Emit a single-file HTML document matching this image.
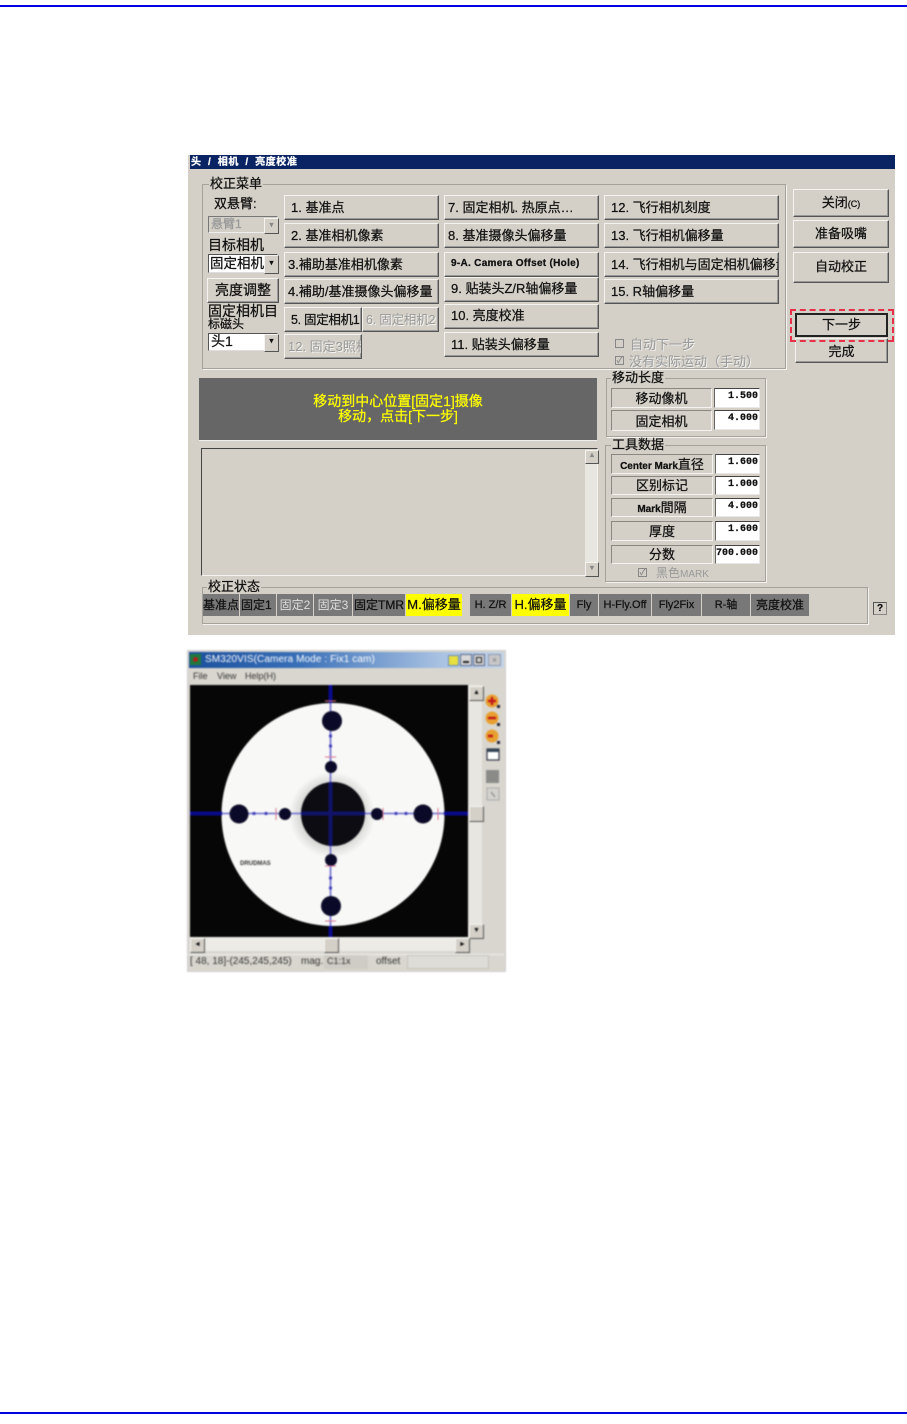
<!DOCTYPE html>
<html><head><meta charset="utf-8">
<style>
html,body{margin:0;padding:0;background:#fff}
body{width:907px;height:1424px;position:relative;overflow:hidden;font-family:"Liberation Sans","Noto Sans CJK SC",sans-serif;color:#111}
.a,.b,.l,.g,.i,.s,.t,.c{position:absolute;box-sizing:border-box}
.b{background:#d4d0c8;border:1px solid;border-color:#f4f3ef #555 #555 #f4f3ef;box-shadow:inset -1px -1px 0 #999;font-size:13px;line-height:24px;white-space:nowrap;overflow:hidden;padding-left:6px}
.m{text-align:center;padding-left:0}
.dis{color:#999;text-shadow:1px 1px 0 #f4f3ef;-webkit-text-stroke:0}
.g{border:1px solid #a5a29b;box-shadow:1px 1px 0 #f4f3ef}
.t{background:#d4d0c8;font-size:13px;line-height:14px;white-space:nowrap;padding:0 1px}
.l{font-size:13px;line-height:15px;white-space:nowrap}
.r{background:#d4d0c8;border:1px solid;border-color:#8a8780 #f4f3ef #f4f3ef #8a8780;text-align:center;font-size:13px;white-space:nowrap;overflow:hidden}
.i{background:#fff;border:1px solid;border-color:#444 #e8e8e8 #e8e8e8 #666;text-align:right;font:bold 10px/16px "Liberation Mono",monospace;padding-right:1px}
.s{background:#787878;top:594px;height:22px;text-align:center;font-size:12px;line-height:22px;white-space:nowrap;overflow:hidden;color:#111}
.y{background:#ff0;font-size:13px}
.c{background:#fff;border:1px solid;border-color:#555 #ddd #ddd #555;font-size:14px;line-height:15px;padding-left:2px;overflow:hidden;white-space:nowrap}
.ar{position:absolute;background:#d4d0c8;border:1px solid;border-color:#f4f3ef #555 #555 #f4f3ef;text-align:center;font-size:7px;line-height:13px;color:#111;overflow:hidden}
#blur1{position:absolute;left:0;top:0;width:907px;height:1424px;filter:blur(.35px);-webkit-text-stroke:.25px currentColor}
#blur2{position:absolute;left:0;top:0;width:907px;height:1424px;filter:blur(.7px)}
</style></head>
<body>
<div class="a" style="left:0;top:5px;width:907px;height:2px;background:#0000e0"></div>
<div class="a" style="left:0;top:1412px;width:907px;height:2px;background:#0000e0"></div>

<div id="blur1">
<div class="a" style="left:188px;top:155px;width:707px;height:480px;background:#d4d0c8"></div>
<div class="a" style="left:190px;top:155px;width:705px;height:14px;background:#0a2463;color:#fff;font:bold 10px/15px 'Liberation Sans','Noto Sans CJK SC',sans-serif;white-space:pre;padding-left:1px;word-spacing:3px;letter-spacing:.6px;overflow:hidden">头 / 相机 / 亮度校准</div>

<!-- calibration menu -->
<div class="g" style="left:202px;top:184px;width:584px;height:185px"></div>
<div class="t" style="left:209px;top:177px">校正菜单</div>
<div class="l" style="left:214px;top:196px">双悬臂:</div>
<div class="c" style="left:208px;top:216px;width:70px;height:17px;background:#d4d0c8;color:#999;font-size:12px;border-color:#777 #eee #eee #777">悬臂1</div>
<div class="ar" style="left:264px;top:218px;width:13px;height:14px;color:#888">▼</div>
<div class="l" style="left:208px;top:238px;font-size:14px">目标相机</div>
<div class="c" style="left:208px;top:254px;width:70px;height:19px;line-height:17px;font-size:13.5px;padding-left:1px">固定相机</div>
<div class="ar" style="left:264px;top:255px;width:13px;height:17px;line-height:15px">▼</div>
<div class="b m" style="left:207px;top:278px;width:72px;height:25px;font-size:14px;line-height:22px">亮度调整</div>
<div class="l" style="left:208px;top:305px;font-size:14px;line-height:12px">固定相机目<br><span style="font-size:12px">标磁头</span></div>
<div class="c" style="left:208px;top:333px;width:70px;height:18px">头1</div>
<div class="ar" style="left:264px;top:334px;width:13px;height:16px;line-height:14px">▼</div>

<div class="b" style="left:284px;top:195px;width:155px;height:25px">1. 基准点</div>
<div class="b" style="left:284px;top:223px;width:155px;height:25px">2. 基准相机像素</div>
<div class="b" style="left:284px;top:252px;width:155px;height:25px;padding-left:3px">3.補助基准相机像素</div>
<div class="b" style="left:284px;top:279px;width:155px;height:25px;padding-left:3px">4.補助/基准摄像头偏移量</div>
<div class="b" style="left:284px;top:307px;width:78px;height:25px;letter-spacing:-.3px;font-size:12.5px">5. 固定相机1</div>
<div class="b dis" style="left:362px;top:307px;width:77px;height:25px;padding-left:3px;font-size:12.5px;letter-spacing:-.2px">6. 固定相机2</div>
<div class="b dis" style="left:284px;top:334px;width:78px;height:25px;padding-left:3px">12. 固定3照相机</div>

<div class="b" style="left:444px;top:195px;width:155px;height:25px;padding-left:3px">7. 固定相机. 热原点…</div>
<div class="b" style="left:444px;top:223px;width:155px;height:25px;padding-left:3px">8. 基准摄像头偏移量</div>
<div class="b" style="left:444px;top:252px;width:155px;height:25px;font-size:10px;font-weight:bold;letter-spacing:.3px;line-height:22px">9-A. Camera Offset (Hole)</div>
<div class="b" style="left:444px;top:277px;width:155px;height:25px;line-height:21px">9. 贴装头Z/R轴偏移量</div>
<div class="b" style="left:444px;top:304px;width:155px;height:25px;line-height:22px">10. 亮度校准</div>
<div class="b" style="left:444px;top:332px;width:155px;height:25px;line-height:23px">11. 贴装头偏移量</div>

<div class="b" style="left:604px;top:195px;width:175px;height:25px">12. 飞行相机刻度</div>
<div class="b" style="left:604px;top:223px;width:175px;height:25px">13. 飞行相机偏移量</div>
<div class="b" style="left:604px;top:252px;width:175px;height:25px">14. 飞行相机与固定相机偏移量</div>
<div class="b" style="left:604px;top:279px;width:175px;height:25px">15. R轴偏移量</div>

<div class="a" style="left:615px;top:339px;width:9px;height:9px;border:1px solid #888;box-sizing:border-box"></div>
<div class="l" style="left:630px;top:337px;color:#999;text-shadow:1px 1px 0 #eee;-webkit-text-stroke:0">自动下一步</div>
<div class="a" style="left:615px;top:356px;width:9px;height:9px;border:1px solid #888;box-sizing:border-box;font-size:8px;line-height:7px;color:#888;text-align:center">✓</div>
<div class="a" style="left:625px;top:350px;width:160px;height:18px;overflow:hidden"><div class="l" style="left:4px;top:4px;color:#999;text-shadow:1px 1px 0 #eee;-webkit-text-stroke:0">没有实际运动（手动）</div></div>

<!-- right buttons -->
<div class="b m" style="left:793px;top:189px;width:96px;height:28px;line-height:25px">关闭<span style="font-size:9px">(C)</span></div>
<div class="b m" style="left:793px;top:220px;width:96px;height:28px;line-height:25px">准备吸嘴</div>
<div class="b m" style="left:793px;top:252px;width:96px;height:31px;line-height:28px">自动校正</div>
<div class="b m" style="left:795px;top:338px;width:93px;height:25px;line-height:25px">完成</div>
<div class="b m" style="left:795px;top:313px;width:93px;height:24px;border:2px solid #222;line-height:20px;box-shadow:none">下一步</div>
<div class="a" style="left:790px;top:309px;width:104px;height:33px;border:2px dashed #e8304a;box-sizing:border-box"></div>

<!-- message panel -->
<div class="a" style="left:199px;top:378px;width:398px;height:63px;background:#666;border-bottom:1px solid #eee;color:#ff0;text-align:center;font-size:14px;line-height:15px;padding-top:16px">移动到中心位置[固定1]摄像<br>移动，点击[下一步]</div>

<!-- text box -->
<div class="a" style="left:201px;top:448px;width:397px;height:128px;border:1px solid;border-color:#444 #f4f3ef #f4f3ef #444;box-sizing:border-box"></div>
<div class="a" style="left:585px;top:450px;width:12px;height:125px;background:#e8e6e0"></div>
<div class="ar" style="left:585px;top:450px;width:12px;height:12px;line-height:10px;color:#888">▲</div>
<div class="ar" style="left:585px;top:562px;width:12px;height:13px;line-height:11px;color:#888">▼</div>

<!-- move length -->
<div class="g" style="left:606px;top:378px;width:160px;height:59px"></div>
<div class="t" style="left:611px;top:371px">移动长度</div>
<div class="r a" style="left:611px;top:388px;width:101px;height:20px;line-height:20px">移动像机</div>
<div class="i" style="left:714px;top:388px;width:46px;height:20px">1.500</div>
<div class="r a" style="left:611px;top:410px;width:101px;height:21px;line-height:21px">固定相机</div>
<div class="i" style="left:714px;top:410px;width:46px;height:20px">4.000</div>

<!-- tool data -->
<div class="g" style="left:605px;top:445px;width:161px;height:137px"></div>
<div class="t" style="left:611px;top:438px">工具数据</div>
<div class="r a" style="left:611px;top:454px;width:102px;height:20px;line-height:19px"><span style="font-size:10px;font-weight:bold">Center Mark</span>直径</div>
<div class="i" style="left:715px;top:454px;width:45px;height:20px">1.600</div>
<div class="r a" style="left:611px;top:476px;width:102px;height:19px;line-height:18px">区别标记</div>
<div class="i" style="left:715px;top:476px;width:45px;height:19px">1.000</div>
<div class="r a" style="left:611px;top:498px;width:102px;height:19px;line-height:18px"><span style="font-size:10px;font-weight:bold">Mark</span>間隔</div>
<div class="i" style="left:715px;top:498px;width:45px;height:19px">4.000</div>
<div class="r a" style="left:611px;top:521px;width:102px;height:20px;line-height:19px">厚度</div>
<div class="i" style="left:715px;top:521px;width:45px;height:20px">1.600</div>
<div class="r a" style="left:611px;top:545px;width:102px;height:19px;line-height:18px">分数</div>
<div class="i" style="left:715px;top:545px;width:45px;height:19px">700.000</div>
<div class="a" style="left:638px;top:568px;width:9px;height:9px;border:1px solid #888;box-sizing:border-box;font-size:8px;line-height:7px;color:#888;text-align:center">✓</div>
<div class="l" style="left:656px;top:566px;color:#999;font-size:12px;-webkit-text-stroke:0">黑色<span style="font-size:10px">MARK</span></div>

<!-- status -->
<div class="g" style="left:202px;top:587px;width:666px;height:37px"></div>
<div class="t" style="left:207px;top:580px">校正状态</div>
<div class="s" style="left:203px;width:36px">基准点</div>
<div class="s" style="left:240px;width:36px;text-align:left;padding-left:1px">固定1</div>
<div class="s" style="left:277px;width:36px;color:#ddd;-webkit-text-stroke:0">固定2</div>
<div class="s" style="left:314px;width:38px;color:#ddd;-webkit-text-stroke:0">固定3</div>
<div class="s" style="left:353px;width:52px;">固定TMR</div>
<div class="s y" style="left:406px;width:56px">M.偏移量</div>
<div class="s" style="left:470px;width:41px;font-size:11px">H. Z/R</div>
<div class="s y" style="left:512px;width:57px">H.偏移量</div>
<div class="s" style="left:570px;width:28px;font-size:11px">Fly</div>
<div class="s" style="left:599px;width:52px;font-size:11px">H-Fly.Off</div>
<div class="s" style="left:652px;width:49px;font-size:11px">Fly2Fix</div>
<div class="s" style="left:702px;width:48px;font-size:11px">R-轴</div>
<div class="s" style="left:751px;width:58px">亮度校准</div>
<div class="a" style="left:873px;top:602px;width:14px;height:13px;border:1px solid;border-color:#555 #888 #888 #555;box-sizing:border-box;font:bold 10px/11px 'Liberation Sans',sans-serif;text-align:center">?</div>
</div>

<!-- camera window -->
<div id="blur2">
<div class="a" style="left:187px;top:650px;width:319px;height:322px;background:#d9d6cf;border:1px solid #cfcfcf;box-sizing:border-box"></div>
<div class="a" style="left:189px;top:652px;width:315px;height:16px;background:linear-gradient(90deg,#1b4f9c 0,#3a70b8 35%,#a9c2e2 80%,#c4d4e8 100%);color:#fff;font-size:10px;letter-spacing:.1px;line-height:16px;padding-left:16px;box-sizing:border-box;white-space:nowrap">SM320VIS(Camera Mode : Fix1 cam)</div>
<div class="a" style="left:190px;top:654px;width:11px;height:11px;background:#1e7a3c"></div>
<div class="a" style="left:193px;top:657px;width:5px;height:5px;background:#b02020;border-radius:50%"></div>
<div class="a" style="left:448px;top:655px;width:11px;height:11px;background:#e6e040;border:1px solid #6a8ab8;box-sizing:border-box"></div>
<div class="a" style="left:460px;top:654px;width:12px;height:12px;background:#d8d8d8;border:1px solid #5a6a90;box-sizing:border-box"></div>
<div class="a" style="left:463px;top:661px;width:6px;height:2px;background:#222"></div>
<div class="a" style="left:473px;top:654px;width:12px;height:12px;background:#d0d0d0;border:1px solid #5a6a90;box-sizing:border-box"></div>
<div class="a" style="left:476px;top:657px;width:6px;height:6px;border:1px solid #222;box-sizing:border-box"></div>
<div class="a" style="left:488px;top:654px;width:13px;height:12px;background:#c8c8c8;border:1px solid #8a98b0;box-sizing:border-box;font-size:9px;line-height:10px;text-align:center;color:#777">×</div>
<div class="a" style="left:193px;top:670px;color:#333;font-size:9px;line-height:12px">File</div>
<div class="a" style="left:217px;top:670px;color:#333;font-size:9px;line-height:12px">View</div>
<div class="a" style="left:245px;top:670px;color:#333;font-size:9px;line-height:12px">Help(H)</div>

<svg class="a" style="left:190px;top:685px" width="278" height="252" viewBox="190 685 278 252">
<defs><radialGradient id="h" cx=".5" cy=".5" r=".5"><stop offset=".6" stop-color="#c8c8c6"/><stop offset="1" stop-color="#f8f8f6"/></radialGradient></defs>
<rect x="190" y="685" width="278" height="252" fill="#060606"/>
<circle cx="333" cy="814.5" r="111.5" fill="#f8f8f6"/>
<circle cx="332" cy="815" r="43" fill="url(#h)"/>
<path d="M330.5 685V937" stroke="#6a6ad0" stroke-width="1.6"/>
<path d="M190 813.5H468" stroke="#6a6ad0" stroke-width="1.6"/>
<g fill="#0a0a28">
<circle cx="332" cy="721" r="10"/>
<circle cx="331" cy="767" r="6"/>
<circle cx="239" cy="814" r="9.5"/>
<circle cx="285" cy="814" r="6"/>
<circle cx="377" cy="814" r="6"/>
<circle cx="423" cy="814" r="9.5"/>
<circle cx="331" cy="860" r="6"/>
<circle cx="331" cy="906" r="10"/>
</g>
<circle cx="333" cy="814" r="32" fill="#0c0c12"/>
<path d="M330.5 782V846M301 813.5H365" stroke="#12126a" stroke-width="4"/>
<path d="M190 813.5H222M444 813.5H468" stroke="#0a0a8c" stroke-width="4"/>
<path d="M330.5 685V703M330.5 926V937" stroke="#0a0a8c" stroke-width="4"/>
<path d="M325 701h11M325 757h11M325 866h11M325 921h11M276 808v12M383 808v12M438 808v12" stroke="#d87090" stroke-width="1"/>
<g fill="#3a3ab8"><circle cx="330.5" cy="736" r="1.6"/><circle cx="330.5" cy="746" r="1.6"/><circle cx="330.5" cy="878" r="1.6"/><circle cx="330.5" cy="888" r="1.6"/><circle cx="254" cy="813.5" r="1.6"/><circle cx="266" cy="813.5" r="1.6"/><circle cx="396" cy="813.5" r="1.6"/><circle cx="406" cy="813.5" r="1.6"/></g>
<text x="240" y="865" font-family="Liberation Sans" font-size="6" font-weight="bold" fill="#333">DRUDMAS</text>
</svg>

<div class="a" style="left:468px;top:685px;width:14px;height:252px;background:#e8e6e0"></div>
<div class="ar" style="left:469px;top:686px;width:13px;height:13px;line-height:11px">▲</div>
<div class="ar" style="left:469px;top:924px;width:13px;height:13px;line-height:11px">▼</div>
<div class="ar" style="left:469px;top:806px;width:13px;height:14px"></div>
<div class="a" style="left:190px;top:937px;width:278px;height:14px;background:#ecebe6"></div>
<div class="ar" style="left:190px;top:938px;width:13px;height:13px;line-height:11px">◄</div>
<div class="ar" style="left:455px;top:938px;width:13px;height:13px;line-height:11px">►</div>
<div class="ar" style="left:324px;top:938px;width:13px;height:13px"></div>

<svg class="a" style="left:484px;top:690px" width="18" height="112" viewBox="0 0 18 112">
<circle cx="8" cy="11" r="6.5" fill="#e8a030"/><path d="M4 11h8M8 7v8" stroke="#c01818" stroke-width="2.4"/>
<circle cx="8" cy="28" r="6.5" fill="#e8a030"/><path d="M4 28h8" stroke="#c01818" stroke-width="2.4"/>
<circle cx="8" cy="46" r="6.5" fill="#e8a030"/><path d="M4 46h5" stroke="#c01818" stroke-width="2.6"/>
<rect x="13" y="15" width="3" height="3" fill="#223"/><rect x="13" y="33" width="3" height="3" fill="#223"/><rect x="13" y="51" width="3" height="3" fill="#223"/>
<rect x="3" y="59" width="12" height="11" fill="#fff" stroke="#334" stroke-width="1.2"/><rect x="3" y="59" width="12" height="3" fill="#345"/>
<rect x="2" y="80" width="13" height="13" fill="#8a8a88"/>
<rect x="3" y="98" width="12" height="12" fill="#d4d2cc" stroke="#aaa"/><path d="M7 102l4 5" stroke="#999" stroke-width="1.5"/>
</svg>

<div class="a" style="left:188px;top:954px;width:316px;height:1px;background:#f0f0ee"></div>
<div class="a" style="left:190px;top:956px;color:#333;font-size:10px;line-height:12px;white-space:nowrap">[ 48, 18]-(245,245,245)</div>
<div class="a" style="left:301px;top:956px;color:#333;font-size:10px;line-height:12px">mag.</div>
<div class="a" style="left:324px;top:955px;width:44px;height:14px;background:#cfccc5;color:#333;font-size:9px;line-height:13px;padding-left:3px;box-sizing:border-box">C1:1x</div>
<div class="a" style="left:376px;top:956px;color:#333;font-size:10px;line-height:12px">offset</div>
<div class="a" style="left:407px;top:955px;width:82px;height:14px;background:#dedcd6;border:1px solid #c4c1ba;box-sizing:border-box"></div>
</div>
</body></html>
